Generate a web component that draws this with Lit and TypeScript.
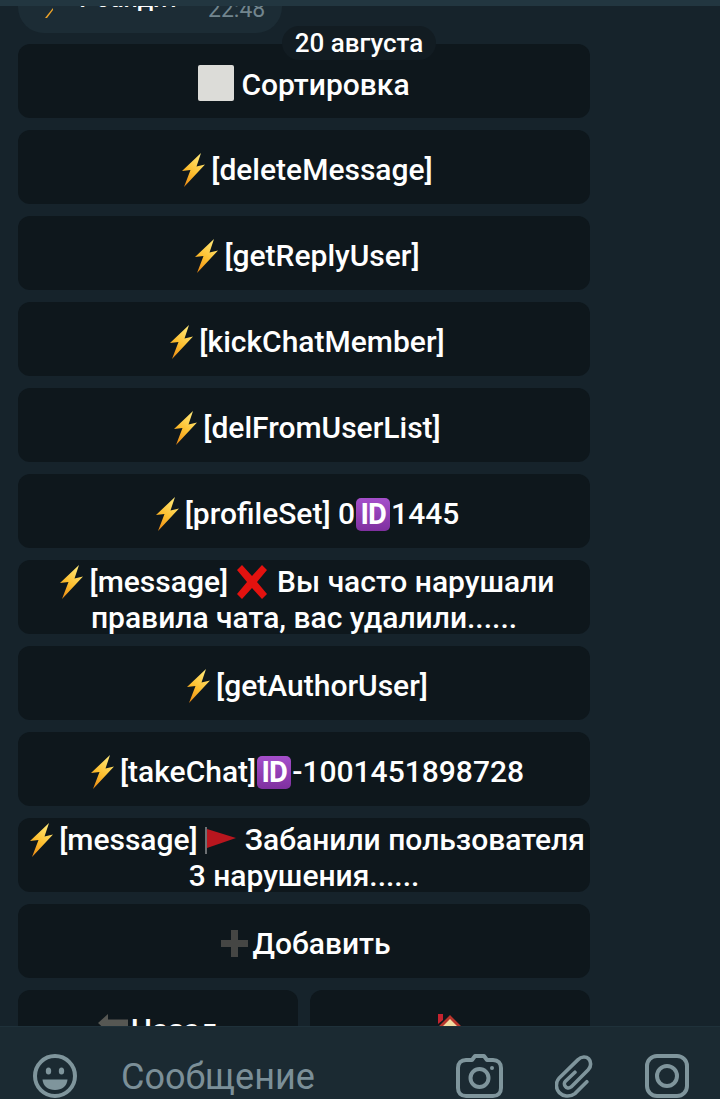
import { LitElement, html, css, svg } from "lit";
import { customElement } from "lit/decorators.js";

const bolt = html`<svg class="e bolt" viewBox="0 0 23 34"><defs><linearGradient id="b" x1="0.7" y1="0" x2="0.2" y2="1"><stop offset="0" stop-color="#ffe878"/><stop offset="0.55" stop-color="#fdbf2f"/><stop offset="1" stop-color="#ec8c16"/></linearGradient></defs><path d="M19 0 0 18l8.500-1L2 34 23 11.500 14.500 13.500Z" fill="url(#b)"/></svg>`;
const square = html`<svg class="e square" viewBox="0 0 36 36"><rect width="36" height="36" rx="2" fill="#dcdcd8"/></svg>`;
const id = html`<span class="id">ID</span>`;
const cross = html`<svg class="e cross" viewBox="0 0 34 34"><path d="M2 5 7 0l10 11L27 0l5 5-10 12 10 12-5 5-10-11L7 34l-5-5 10-12Z" fill="#e3120f"/></svg>`;
const flag = html`<svg class="e flag" viewBox="0 0 32 27"><rect x="0" y="0" width="2" height="27" fill="#6c7073"/><path d="M2 2 31 11 2 21Z" fill="#b8161e"/></svg>`;
const plus = html`<svg class="e plus" viewBox="0 0 27 27"><path d="M10 0h7v10h10v7H17v10h-7V17H0v-7h10Z" fill="#454644"/></svg>`;
const arrow = html`<svg class="e arrow" viewBox="0 0 30 18"><path d="M10 0V5.500H30V12H10V18L0 9Z" fill="#565753"/></svg>`;
const house = html`<svg class="e house" viewBox="0 0 26 26"><path d="M1 0h5v6L1 10Z" fill="#c4232f"/><path d="M4 26V13L13 4l9 9v13Z" fill="#f2dca0"/><path d="M0 14 13 1l13 13-2 2L13 5 2 16Z" fill="#b9352c"/></svg>`;

const face = svg`<circle cx="22" cy="22" r="20" fill="none" stroke="#7f959c" stroke-width="4"/><ellipse cx="15.500" cy="17" rx="2.700" ry="3.500" fill="#7f959c"/><ellipse cx="28.500" cy="17" rx="2.700" ry="3.500" fill="#7f959c"/><path d="M9.500 25.500h25C34 32 29 36 22 36S10 32 9.500 25.500Z" fill="#7f959c"/>`;

@customElement("app-root")
export class AppRoot extends LitElement {
  static styles = css`
    :host { display: flex; flex-direction: column; height: 1099px; overflow: hidden; background: #16232b;
      font-family: Roboto, "Liberation Sans", sans-serif; color: #fff; }
    .strip { height: 6px; flex: none; background: #223640; }
    .messages { position: relative; flex: 1; min-height: 0; overflow: hidden; padding: 0 0 0 18px; }
    .bubble { box-sizing: border-box; width: 264px; height: 27px; border-radius: 0 0 26px 26px; background: #1c2c35;
      overflow: hidden; display: flex; align-items: flex-end; padding: 0 0 12px 27px; font-size: 25px; line-height: 25px; font-weight: 500; white-space: nowrap; }
    .tinybolt { flex: none; width: 8px; height: 10px; margin: 0 22px 3px 0; }
    .name { width: 133px; margin-bottom: 10px; flex: none; }
    .bubble .time { font-size: 23px; font-weight: 400; line-height: 23px; color: #72858e; }
    .date { position: absolute; left: 282px; top: 20px; width: 154px; height: 34px; border-radius: 17px; background: #121c22;
      display: flex; align-items: center; justify-content: center; font-size: 26px; font-weight: 500; }
    .keys { display: grid; grid-template-columns: 280px 280px; column-gap: 12px; row-gap: 12px; margin-top: 11px; width: 572px; }
    .key { grid-column: span 2; box-sizing: border-box; height: 74px; border-radius: 12px; background: #0e171c; padding-top: 6px;
      display: flex; align-items: center; justify-content: center; text-align: center; font-size: 30px; font-weight: 500; line-height: 36px; white-space: nowrap; }
    .key.half { grid-column: span 1; }
    .e { display: inline-block; vertical-align: -7px; }
    .bolt { width: 23px; height: 34px; margin: 0 6px 0 7px; }
    .square { width: 36px; height: 36px; margin: 0 7px 0 0; vertical-align: -6px; }
    .cross { width: 34px; height: 34px; margin: 0 8px 0 7px; }
    .flag { width: 32px; height: 27px; margin: 0 8px 0 7px; vertical-align: -4px; }
    .plus { width: 27px; height: 27px; margin: 0 4px 0 4px; vertical-align: -3px; }
    .arrow { width: 30px; height: 18px; margin-right: 3px; vertical-align: 8px; }
    .house { width: 26px; height: 26px; vertical-align: 0; }
    .id { display: inline-block; width: 34px; height: 33px; margin: 0 1px; border-radius: 5px; background: linear-gradient(#a54fcb, #7f309f); color: #fff;
      font-size: 29px; font-weight: 700; line-height: 33px; letter-spacing: -1px; }
    .input { flex: none; box-sizing: border-box; height: 73px; background: #1b2a32; border-top: 1px solid #1f313a;
      display: flex; align-items: center; padding: 25px 31px 0 33px; }
    .input svg { flex: none; display: block; }
    .ph { flex: 1; margin-left: 44px; padding-top: 2px; font-size: 36px; font-weight: 400; color: #7b8f98; }
    .clip { margin: 0 52px; }
  `;

  render() {
    return html`
      <div class="strip"></div>
      <div class="messages">
        <div class="bubble">
          <svg class="tinybolt" viewBox="0 0 8 10"><path d="M8 0 0 10h2l6-8Z" fill="#f0a528"/></svg>
          <span class="name">Т бандит</span><span class="time">22:48</span>
        </div>
        <div class="keys">
          <div class="key"><span>${square}Сортировка</span></div>
          <div class="key"><span>${bolt}[deleteMessage]</span></div>
          <div class="key"><span>${bolt}[getReplyUser]</span></div>
          <div class="key"><span>${bolt}[kickChatMember]</span></div>
          <div class="key"><span>${bolt}[delFromUserList]</span></div>
          <div class="key"><span>${bolt}[profileSet] 0${id}1445</span></div>
          <div class="key"><span>${bolt}[message]${cross}Вы часто нарушали<br />правила чата, вас удалили......</span></div>
          <div class="key"><span>${bolt}[getAuthorUser]</span></div>
          <div class="key"><span>${bolt}[takeChat]${id}-1001451898728</span></div>
          <div class="key"><span>${bolt}[message]${flag}Забанили пользователя<br />3 нарушения......</span></div>
          <div class="key"><span>${plus}Добавить</span></div>
          <div class="key half"><span>${arrow}Назад</span></div>
          <div class="key half"><span>${house}</span></div>
        </div>
        <div class="date">20 августа</div>
      </div>
      <div class="input">
        <svg width="44" height="44" viewBox="0 0 44 44">${face}</svg>
        <div class="ph">Сообщение</div>
        <svg width="47" height="44" viewBox="0 0 47 44" fill="none" stroke="#7f959c" stroke-width="4">
          <path d="M16 6 19 2h9l3 4h6c5 0 8 3 8 8v20c0 5-3 8-8 8H10c-5 0-8-3-8-8V14c0-5 3-8 8-8Z" stroke-linejoin="round"/>
          <circle cx="23.500" cy="24" r="9"/><circle cx="36" cy="14" r="2" fill="#7f959c" stroke="none"/>
        </svg>
        <svg class="clip" width="38" height="44" viewBox="0 0 40 44" fill="none" stroke="#7f959c" stroke-width="3.800" stroke-linecap="round">
          <path d="M33.500 28 21 40.500C15 45 8 43 4.500 39.500 1 36 0 29 4.500 24L24 5C28 1 33 1.500 35.500 4 38 6.500 38.500 12 35 15.500L17 33.500C14.500 35.500 12 34.500 11 33 9.500 31.500 9.500 29 11 27.500L21 18"/>
        </svg>
        <svg width="44" height="44" viewBox="0 0 44 44" fill="none" stroke="#7f959c" stroke-width="4">
          <rect x="2" y="2" width="40" height="40" rx="10"/><circle cx="22" cy="22" r="10"/>
        </svg>
      </div>
    `;
  }
}
